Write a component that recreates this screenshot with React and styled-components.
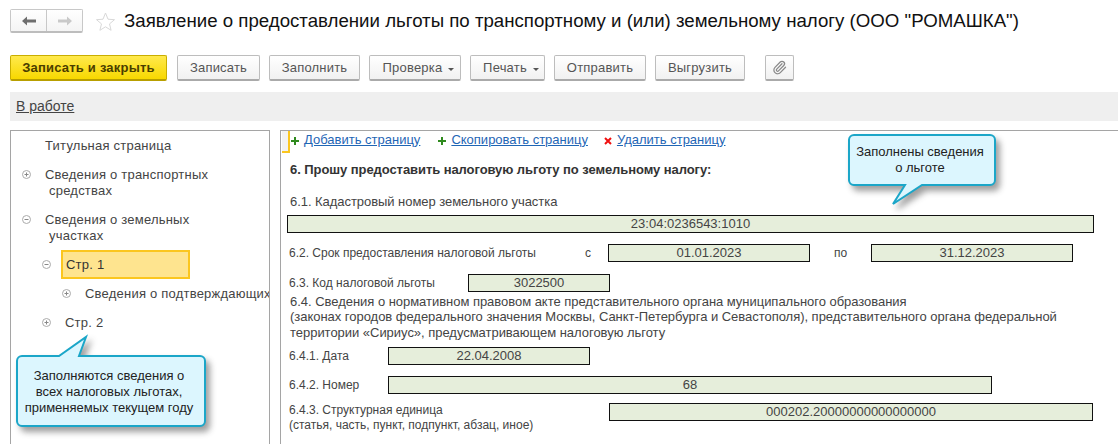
import React from 'react'
import styled, { createGlobalStyle } from 'styled-components'
import { Paperclip } from 'lucide-react'

const GlobalStyle = createGlobalStyle`
	html, body {
		margin: 0;
		padding: 0;
		background: #fff;
		overflow: hidden;
	}
	body {
		font-family: "Liberation Sans", Arial, sans-serif;
		color: #333;
	}
`

const Page = styled.div`
	width: 1118px;
	height: 444px;
	overflow: hidden;
	display: flex;
	flex-direction: column;
	position: relative;
`

const Header = styled.div`
	display: flex;
	align-items: center;
	height: 24px;
	margin: 9px 0 22px 10px;
`

const NavGroup = styled.div`
	display: flex;
	width: 73px;
	height: 24px;
	box-sizing: border-box;
	border: 1px solid #c8c8c8;
	border-bottom: 2px solid #bdbdbd;
	border-radius: 2px;
`

const NavButton = styled.div`
	flex: 1;
	display: flex;
	align-items: center;
	justify-content: center;
	background: linear-gradient(#fff, #f4f4f4);
	&:first-child {
		border-right: 1px solid #c8c8c8;
	}
`

const StarIcon = styled.svg`
	width: 19px;
	height: 19px;
	margin: 0 9px 0 13px;
`

const Title = styled.h1`
	margin: 0;
	font-size: 18.67px;
	font-weight: 400;
	color: #111;
	white-space: nowrap;
`

const Toolbar = styled.div`
	display: flex;
	height: 26px;
	margin: 0 0 11px 10px;
`

const Button = styled.div`
	box-sizing: border-box;
	width: ${p => p.$w}px;
	margin-right: ${p => p.$mr || 9}px;
	display: flex;
	align-items: center;
	justify-content: center;
	gap: 6px;
	font-size: 13px;
	letter-spacing: 0.2px;
	color: #555;
	background: linear-gradient(#fff, #f1f1f1);
	border: 1px solid #bdbdbd;
	border-bottom: 2px solid #aaa;
	border-radius: 2px;
`

const PrimaryButton = styled(Button)`
	font-weight: 700;
	color: #4a3d00;
	background: linear-gradient(#ffe94d, #f8d800);
	border-color: #c9ae00;
	border-bottom-color: #b89f00;
`

const MenuButton = styled(Button)`
	padding-left: 7px;
`

const Caret = styled.span`
	width: 0;
	height: 0;
	margin-top: 3px;
	border-left: 3px solid transparent;
	border-right: 3px solid transparent;
	border-top: 3px solid #555;
`

const StatusBar = styled.div`
	box-sizing: border-box;
	height: 29px;
	margin-left: 10px;
	padding: 0 0 2px 6px;
	display: flex;
	align-items: center;
	background: #efefef;
	font-size: 14px;
	color: #444;
	text-decoration: underline;
`

const Main = styled.div`
	flex: 1;
	display: flex;
	margin: 9px 0 0 10px;
	min-height: 0;
`

const TreePanel = styled.div`
	box-sizing: border-box;
	width: 260px;
	margin-right: 10px;
	padding-top: 6px;
	border: 1px solid #a5a5a5;
	border-bottom: 0;
	overflow: hidden;
	font-size: 13px;
	letter-spacing: 0.22px;
	color: #444;
`

const TreeRow = styled.div`
	display: flex;
	align-items: center;
	height: 16px;
	margin-top: ${p => p.$mt || 0}px;
	padding-left: ${p => p.$indent}px;
	white-space: nowrap;
`

const TreeToggle = styled.svg`
	flex: none;
	width: 9px;
	height: 9px;
	margin-right: 14px;
`

const SelectedRow = styled(TreeRow)`
	height: 29px;
`

const SelectedNode = styled.div`
	box-sizing: border-box;
	width: 129px;
	height: 29px;
	margin-left: -4px;
	padding-left: 3px;
	display: flex;
	align-items: center;
	background: #fee48f;
	border: 2px solid #fbc61f;
	color: #333;
`

const FormPanel = styled.div`
	flex: 1;
	min-width: 0;
	position: relative;
	border-top: 1px solid #a5a5a5;
	border-left: 1px solid #a5a5a5;
	font-size: 12px;
	color: #444;
`

const FocusMark = styled.div`
	position: absolute;
	left: 1px;
	top: 0;
	width: 8px;
	height: 22px;
	box-sizing: border-box;
	background: #f2f2f2;
	border-right: 2px solid #fbc61f;
	border-bottom: 2px solid #fbc61f;
`

const ActionBar = styled.div`
	display: flex;
	align-items: center;
	height: 16px;
	margin: 0 0 0 10px;
	font-size: 13px;
`

const ActionIcon = styled.svg`
	width: 8px;
	height: 8px;
	margin: 3px 5px 0 ${p => p.$ml || 0}px;
`

const ActionLink = styled.a`
	color: #1f66b5;
	text-decoration: underline;
`

const Heading = styled.div`
	margin: 15px 0 0 9px;
	font-size: 13px;
	letter-spacing: -0.07px;
	line-height: 16px;
	font-weight: 700;
	color: #333;
`

const Label = styled.div`
	margin: ${p => p.$mt || 0}px 0 0 9px;
	font-size: 13px;
	letter-spacing: -0.05px;
	line-height: 16px;
`

const FieldRow = styled.div`
	display: flex;
	align-items: center;
	height: 18px;
	margin-top: ${p => p.$mt}px;
	padding-left: ${p => p.$pl || 0}px;
`

const RowLabel = styled.span`
	flex: none;
	box-sizing: border-box;
	width: ${p => p.$w}px;
	padding-left: ${p => p.$pl || 0}px;
	white-space: nowrap;
`

const Field = styled.div`
	flex: none;
	box-sizing: border-box;
	width: ${p => p.$w}px;
	height: 18px;
	padding-bottom: 1px;
	display: flex;
	align-items: center;
	justify-content: center;
	background: #e6eedb;
	border: 1px solid #111;
	font-size: 13px;
	color: #444;
`

const Paragraph = styled.div`
	margin: 2px 0 0 9px;
	font-size: 13px;
	letter-spacing: -0.03px;
	line-height: 15.4px;
	white-space: pre-line;
`

const TwoLineRow = styled.div`
	display: flex;
	margin-top: 9px;
	padding-left: 8px;
`

const SmallNote = styled.div`
	flex: none;
	width: 320px;
	font-size: 12px;
	line-height: 14.5px;
`

const Bubble = styled.div`
	position: absolute;
	left: ${p => p.$x}px;
	top: ${p => p.$y}px;
	width: ${p => p.$w}px;
	height: ${p => p.$h}px;
`

const BubbleShape = styled.svg`
	position: absolute;
	left: 0;
	top: 0;
	overflow: visible;
	filter: drop-shadow(4px 5px 3px rgba(40, 40, 40, 0.45));
`

const BubbleText = styled.div`
	position: absolute;
	left: 0;
	right: 4px;
	top: ${p => p.$top}px;
	text-align: center;
	font-size: 13px;
	line-height: 16px;
	color: #222;
	white-space: pre-line;
`

const Toggle = ({ open }) => (
	<TreeToggle viewBox="0 0 9 9">
		<circle cx="4.5" cy="4.5" r="4" fill="#fff" stroke="#aaa" />
		<path d={open ? 'M2.5 4.5h4' : 'M2.5 4.5h4M4.5 2.5v4'} stroke="#888" fill="none" />
	</TreeToggle>
)

const Plus = ({ ml }) => (
	<ActionIcon $ml={ml} viewBox="0 0 8 8">
		<path d="M0 4h8M4 0v8" stroke="#2f8a1e" strokeWidth="2" />
	</ActionIcon>
)

const Cross = ({ ml }) => (
	<ActionIcon $ml={ml} viewBox="0 0 8 8">
		<path d="M1 1l6 6M7 1l-6 6" stroke="#f01010" strokeWidth="2" />
	</ActionIcon>
)

const App = () => {
	return (
		<Page>
			<GlobalStyle />
			<Header>
				<NavGroup>
					<NavButton>
						<svg width="14" height="10" viewBox="0 0 14 10">
							<path d="M0 5l5-4.5v3h9v3H5v3z" fill="#6e6e6e" />
						</svg>
					</NavButton>
					<NavButton>
						<svg width="14" height="10" viewBox="0 0 14 10">
							<path d="M14 5L9 .5v3H0v3h9v3z" fill="#c9c9c9" />
						</svg>
					</NavButton>
				</NavGroup>
				<StarIcon viewBox="0 0 19 19">
					<path d="M9.5 1l2.5 6.2 6.5.5-5 4.2 1.6 6.4-5.6-3.5-5.6 3.5 1.6-6.4-5-4.2 6.5-.5z" fill="#fff" stroke="#d8d8d8" />
				</StarIcon>
				<Title>Заявление о предоставлении льготы по транспортному и (или) земельному налогу (ООО "РОМАШКА")</Title>
			</Header>

			<Toolbar>
				<PrimaryButton $w={157} $mr={10}>Записать и закрыть</PrimaryButton>
				<Button $w={83}>Записать</Button>
				<Button $w={91}>Заполнить</Button>
				<MenuButton $w={92}>Проверка <Caret /></MenuButton>
				<MenuButton $w={75}>Печать <Caret /></MenuButton>
				<Button $w={92}>Отправить</Button>
				<Button $w={90} $mr={20}>Выгрузить</Button>
				<Button $w={29}><Paperclip size={15} color="#888" /></Button>
			</Toolbar>

			<StatusBar>В работе</StatusBar>

			<Main>
				<TreePanel>
					<TreeRow $indent={34}>Титульная страница</TreeRow>
					<TreeRow $indent={11} $mt={13}><Toggle />Сведения о транспортных</TreeRow>
					<TreeRow $indent={38}>средствах</TreeRow>
					<TreeRow $indent={11} $mt={13}><Toggle open />Сведения о земельных</TreeRow>
					<TreeRow $indent={38}>участках</TreeRow>
					<SelectedRow $indent={31} $mt={7}><Toggle open /><SelectedNode>Стр. 1</SelectedNode></SelectedRow>
					<TreeRow $indent={51} $mt={6}><Toggle />Сведения о подтверждающих</TreeRow>
					<TreeRow $indent={31} $mt={13}><Toggle />Стр. 2</TreeRow>
				</TreePanel>

				<FormPanel>
					<FocusMark />
					<ActionBar>
						<Plus />
						<ActionLink>Добавить страницу</ActionLink>
						<Plus ml={18} />
						<ActionLink>Скопировать страницу</ActionLink>
						<Cross ml={16} />
						<ActionLink>Удалить страницу</ActionLink>
					</ActionBar>
					<Heading>6. Прошу предоставить налоговую льготу по земельному налогу:</Heading>
					<Label $mt={16}>6.1. Кадастровый номер земельного участка</Label>
					<FieldRow $mt={5} $pl={6}><Field $w={807}>23:04:0236543:1010</Field></FieldRow>
					<FieldRow $mt={11} $pl={8}>
						<RowLabel $w={296}>6.2. Срок предоставления налоговой льготы</RowLabel>
						<RowLabel $w={23}>с</RowLabel>
						<Field $w={202}>01.01.2023</Field>
						<RowLabel $w={61} $pl={24}>по</RowLabel>
						<Field $w={202}>31.12.2023</Field>
					</FieldRow>
					<FieldRow $mt={12} $pl={8}>
						<RowLabel $w={179}>6.3. Код налоговой льготы</RowLabel>
						<Field $w={142}>3022500</Field>
					</FieldRow>
					<Paragraph>{'6.4. Сведения о нормативном правовом акте представительного органа муниципального образования\n(законах городов федерального значения Москвы, Санкт-Петербурга и Севастополя), представительного органа федеральной\nтерритории «Сириус», предусматривающем налоговую льготу'}</Paragraph>
					<FieldRow $mt={7} $pl={8}>
						<RowLabel $w={99}>6.4.1. Дата</RowLabel>
						<Field $w={202}>22.04.2008</Field>
					</FieldRow>
					<FieldRow $mt={11} $pl={8}>
						<RowLabel $w={99}>6.4.2. Номер</RowLabel>
						<Field $w={604}>68</Field>
					</FieldRow>
					<TwoLineRow>
						<SmallNote>6.4.3. Структурная единица<br />(статья, часть, пункт, подпункт, абзац, иное)</SmallNote>
						<Field $w={484}>000202.20000000000000000</Field>
					</TwoLineRow>
				</FormPanel>
			</Main>

			<Bubble $x={16} $y={336} $w={190} $h={91}>
				<BubbleShape width="190" height="91" viewBox="0 0 190 91">
					<path d="M6 20H43L70 1 63 20H184a5 5 0 0 1 5 5V85a5 5 0 0 1-5 5H6a5 5 0 0 1-5-5V25a5 5 0 0 1 5-5z" fill="#dcf6fe" stroke="#1ba6c8" strokeWidth="2" />
				</BubbleShape>
				<BubbleText $top={32}>{'Заполняются сведения о\nвсех налоговых льготах,\nприменяемых текущем году'}</BubbleText>
			</Bubble>

			<Bubble $x={848} $y={134} $w={148} $h={71}>
				<BubbleShape width="148" height="71" viewBox="0 0 148 71">
					<path d="M6 1H142a5 5 0 0 1 5 5V46a5 5 0 0 1-5 5H74L45 70 57 51H6a5 5 0 0 1-5-5V6a5 5 0 0 1 5-5z" fill="#dcf6fe" stroke="#1ba6c8" strokeWidth="2" />
				</BubbleShape>
				<BubbleText $top={10}>{'Заполнены сведения\nо льготе'}</BubbleText>
			</Bubble>
		</Page>
	)
}

export default App
